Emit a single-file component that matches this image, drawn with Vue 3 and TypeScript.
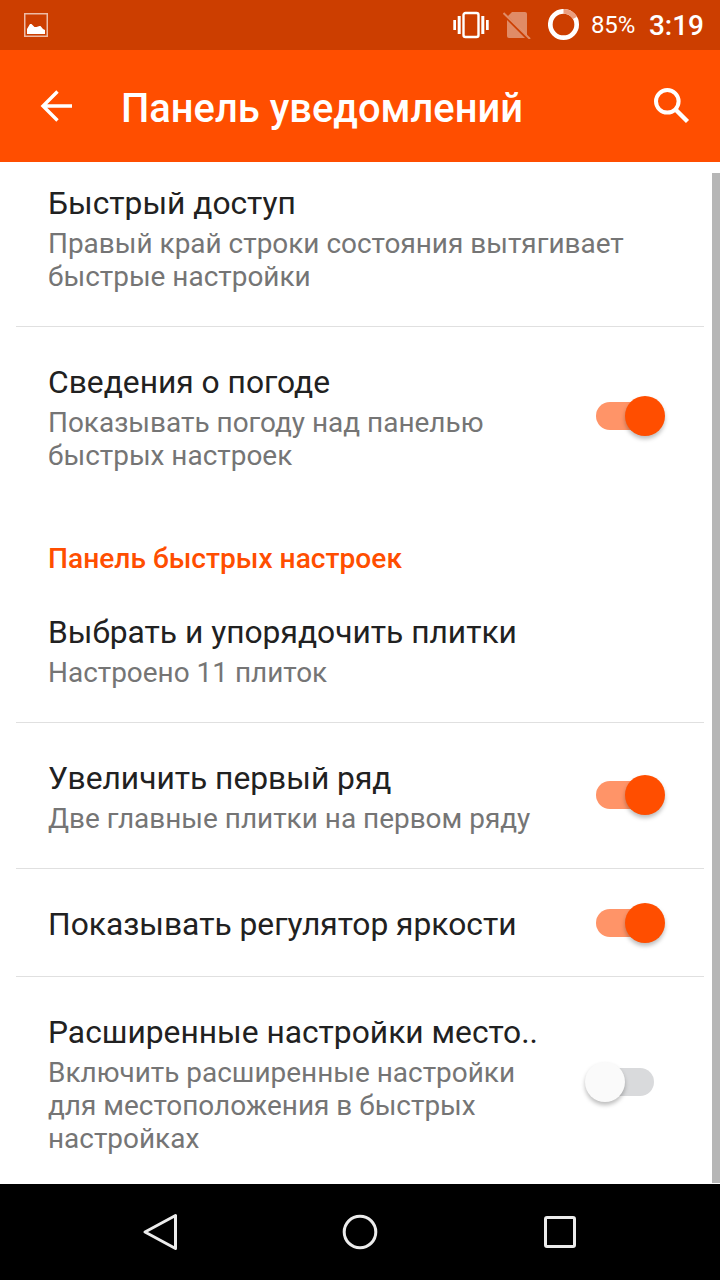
<script setup lang="ts">
interface Row {
  title: string
  sub?: string[]
  toggle?: boolean
  on?: boolean
  cls: string
  divider?: boolean
}
const topRows: Row[] = [
  { title: 'Быстрый доступ', sub: ['Правый край строки состояния вытягивает', 'быстрые настройки'], cls: 'r1', divider: true },
  { title: 'Сведения о погоде', sub: ['Показывать погоду над панелью', 'быстрых настроек'], toggle: true, on: true, cls: 'r2' },
]
const bottomRows: Row[] = [
  { title: 'Выбрать и упорядочить плитки', sub: ['Настроено 11 плиток'], cls: 'r3', divider: true },
  { title: 'Увеличить первый ряд', sub: ['Две главные плитки на первом ряду'], toggle: true, on: true, cls: 'r4', divider: true },
  { title: 'Показывать регулятор яркости', toggle: true, on: true, cls: 'r5', divider: true },
  { title: 'Расширенные настройки место..', sub: ['Включить расширенные настройки', 'для местоположения в быстрых', 'настройках'], toggle: true, on: false, cls: 'r6' },
]
</script>

<template>
  <div class="screen">
    <header class="status">
      <svg class="st-image" width="24" height="24" viewBox="0 0 24 24">
        <rect x="0.75" y="0.75" width="22.5" height="22.5" fill="none" stroke="#fff" stroke-opacity="0.65" stroke-width="1.5" />
        <path d="M3 21v-5l3-5h1.5l3 3h2l3-1h1l2.500 3 2 1v4z" fill="#fff" />
      </svg>
      <span class="st-spacer"></span>
      <svg class="st-vib" width="36" height="28" viewBox="0 0 36 28">
        <rect x="10.5" y="2" width="15" height="24" rx="2" fill="none" stroke="#fff" stroke-width="2.4" />
        <rect x="0.3" y="9" width="2.700" height="10" fill="#fff" />
        <rect x="4.700" y="5" width="3" height="18" fill="#fff" />
        <rect x="28.300" y="5" width="3" height="18" fill="#fff" />
        <rect x="33" y="9" width="2.700" height="10" fill="#fff" />
      </svg>
      <svg class="st-sim" width="28" height="28" viewBox="0 0 28 28">
        <path d="M9 1H22a2 2 0 0 1 2 2V25a2 2 0 0 1-2 2H6a2 2 0 0 1-2-2V6z" fill="#fff" fill-opacity="0.4" />
        <path d="M0 2.500L26 28.500" stroke="#cc3e00" stroke-width="3.500" />
        <path d="M0.500 2L27 28" stroke="#fff" stroke-opacity="0.4" stroke-width="2" />
      </svg>
      <svg class="st-batt" width="32" height="32" viewBox="0 0 32 32">
        <circle cx="15.500" cy="15.500" r="13.200" fill="none" stroke="#fff" stroke-width="4.700" />
        <path d="M15.500 2.300a13.200 13.200 0 0 1 11.400 6.600" fill="none" stroke="#eb9e7f" stroke-width="4.700" />
      </svg>
      <span class="st-pct">85%</span>
      <span class="st-time">3:19</span>
    </header>

    <div class="toolbar">
      <svg class="tb-back" width="32" height="32" viewBox="0 0 32 32">
        <path d="M32 16H3M17.500 1.500L3 16l14.500 14.500" fill="none" stroke="#fff" stroke-width="3.400" />
      </svg>
      <h1 class="tb-title">Панель уведомлений</h1>
      <svg class="tb-search" width="36" height="36" viewBox="0 0 36 36">
        <circle cx="13.300" cy="13.300" r="11.300" fill="none" stroke="#fff" stroke-width="4" />
        <path d="M21.500 21.500L33.500 33.500" stroke="#fff" stroke-width="4.400" />
      </svg>
    </div>

    <main class="list">
      <template v-for="row in topRows" :key="row.title">
        <div class="row" :class="row.cls">
          <div class="text">
            <div class="title">{{ row.title }}</div>
            <div v-for="line in row.sub" :key="line" class="sub">{{ line }}</div>
          </div>
          <span v-if="row.toggle" class="switch" :class="{ on: row.on }"><span class="thumb"></span></span>
        </div>
        <div v-if="row.divider" class="divider"></div>
      </template>

      <div class="section">Панель быстрых настроек</div>

      <template v-for="row in bottomRows" :key="row.title">
        <div class="row" :class="row.cls">
          <div class="text">
            <div class="title">{{ row.title }}</div>
            <div v-for="line in row.sub" :key="line" class="sub">{{ line }}</div>
          </div>
          <span v-if="row.toggle" class="switch" :class="{ on: row.on }"><span class="thumb"></span></span>
        </div>
        <div v-if="row.divider" class="divider"></div>
      </template>

      <div class="scrollbar"></div>
    </main>

    <nav class="nav">
      <svg width="36" height="38" viewBox="0 0 36 38">
        <path d="M33.500 2.500v33L3 19z" fill="none" stroke="#ececec" stroke-width="3" stroke-linejoin="round" />
      </svg>
      <svg width="36" height="36" viewBox="0 0 36 36">
        <circle cx="18" cy="18" r="15.800" fill="none" stroke="#ececec" stroke-width="3" />
      </svg>
      <svg width="32" height="32" viewBox="0 0 32 32">
        <rect x="1.500" y="1.500" width="29" height="29" rx="1.500" fill="none" stroke="#ececec" stroke-width="3" />
      </svg>
    </nav>
  </div>
</template>

<style>
html, body { margin: 0; padding: 0; background: #fff; }
</style>

<style scoped>
.screen {
  width: 720px;
  height: 1280px;
  display: flex;
  flex-direction: column;
  overflow: hidden;
  font-family: Roboto, "Noto Sans", sans-serif;
  background: #fff;
}
.status {
  height: 50px;
  flex: none;
  display: flex;
  align-items: center;
  background: #cc3e00;
  color: #fff;
  padding: 0 16px 0 24px;
  box-sizing: border-box;
}
.st-image { flex: none; }
.st-spacer { flex: 1; }
.st-vib { flex: none; }
.st-sim { flex: none; margin-left: 14px; }
.st-batt { flex: none; margin-left: 17px; }
.st-pct { font-size: 24px; margin-left: 11px; width: 44px; }
.st-time { font-size: 28px; font-weight: 500; margin-left: 14px; }

.toolbar {
  height: 112px;
  flex: none;
  display: flex;
  align-items: center;
  background: #ff4e00;
  padding: 0 30px 0 40px;
  box-sizing: border-box;
}
.tb-back { flex: none; }
.tb-title {
  flex: 1;
  margin: 0 0 0 49px;
  padding-top: 6px;
  font-size: 39.9px;
  font-weight: 500;
  line-height: 48px;
  color: #fff;
}
.tb-search { flex: none; }

.list {
  flex: 1;
  position: relative;
  overflow: hidden;
  min-height: 0;
}
.row {
  display: flex;
  align-items: center;
  padding: 35px 66px 33px 48px;
}
.r1 { padding-top: 21px; padding-bottom: 33px; }
.r2 { padding-top: 35px; padding-bottom: 34px; }
.r5 { padding-top: 35px; padding-bottom: 31px; }
.r6 { padding-bottom: 31px; }
.text { flex: 1; min-width: 0; }
.title {
  font-size: 31.75px;
  line-height: 40px;
  padding-top: 1px;
  color: #212121;
  white-space: nowrap;
}
.sub {
  font-size: 27.95px;
  line-height: 33px;
  color: #757575;
  white-space: nowrap;
}
.title + .sub { margin-top: 3px; }
.divider {
  height: 1px;
  margin: 0 16px;
  background: #e0e0e0;
}
.section {
  padding: 37px 48px 2px;
  font-size: 28.15px;
  line-height: 32px;
  font-weight: 500;
  color: #ff4e00;
}
.switch {
  flex: none;
  position: relative;
  width: 58px;
  height: 28px;
  border-radius: 14px;
  background: #d9dadc;
  margin: -3px 0 0 8px;
}
.switch.on { background: #ff9468; }
.thumb {
  position: absolute;
  top: -6px;
  left: -11px;
  width: 40px;
  height: 40px;
  border-radius: 50%;
  background: #fafafa;
  box-shadow: 0 3px 4px rgba(0, 0, 0, 0.26);
}
.switch.on .thumb {
  left: 29px;
  background: #ff4e00;
}
.scrollbar {
  position: absolute;
  top: 11px;
  right: 0;
  bottom: 1px;
  width: 8px;
  background: #b6b6b6;
}
.nav {
  height: 96px;
  flex: none;
  background: #000;
  display: grid;
  grid-template-columns: repeat(3, 200px);
  justify-content: center;
  justify-items: center;
  align-items: center;
}
</style>
